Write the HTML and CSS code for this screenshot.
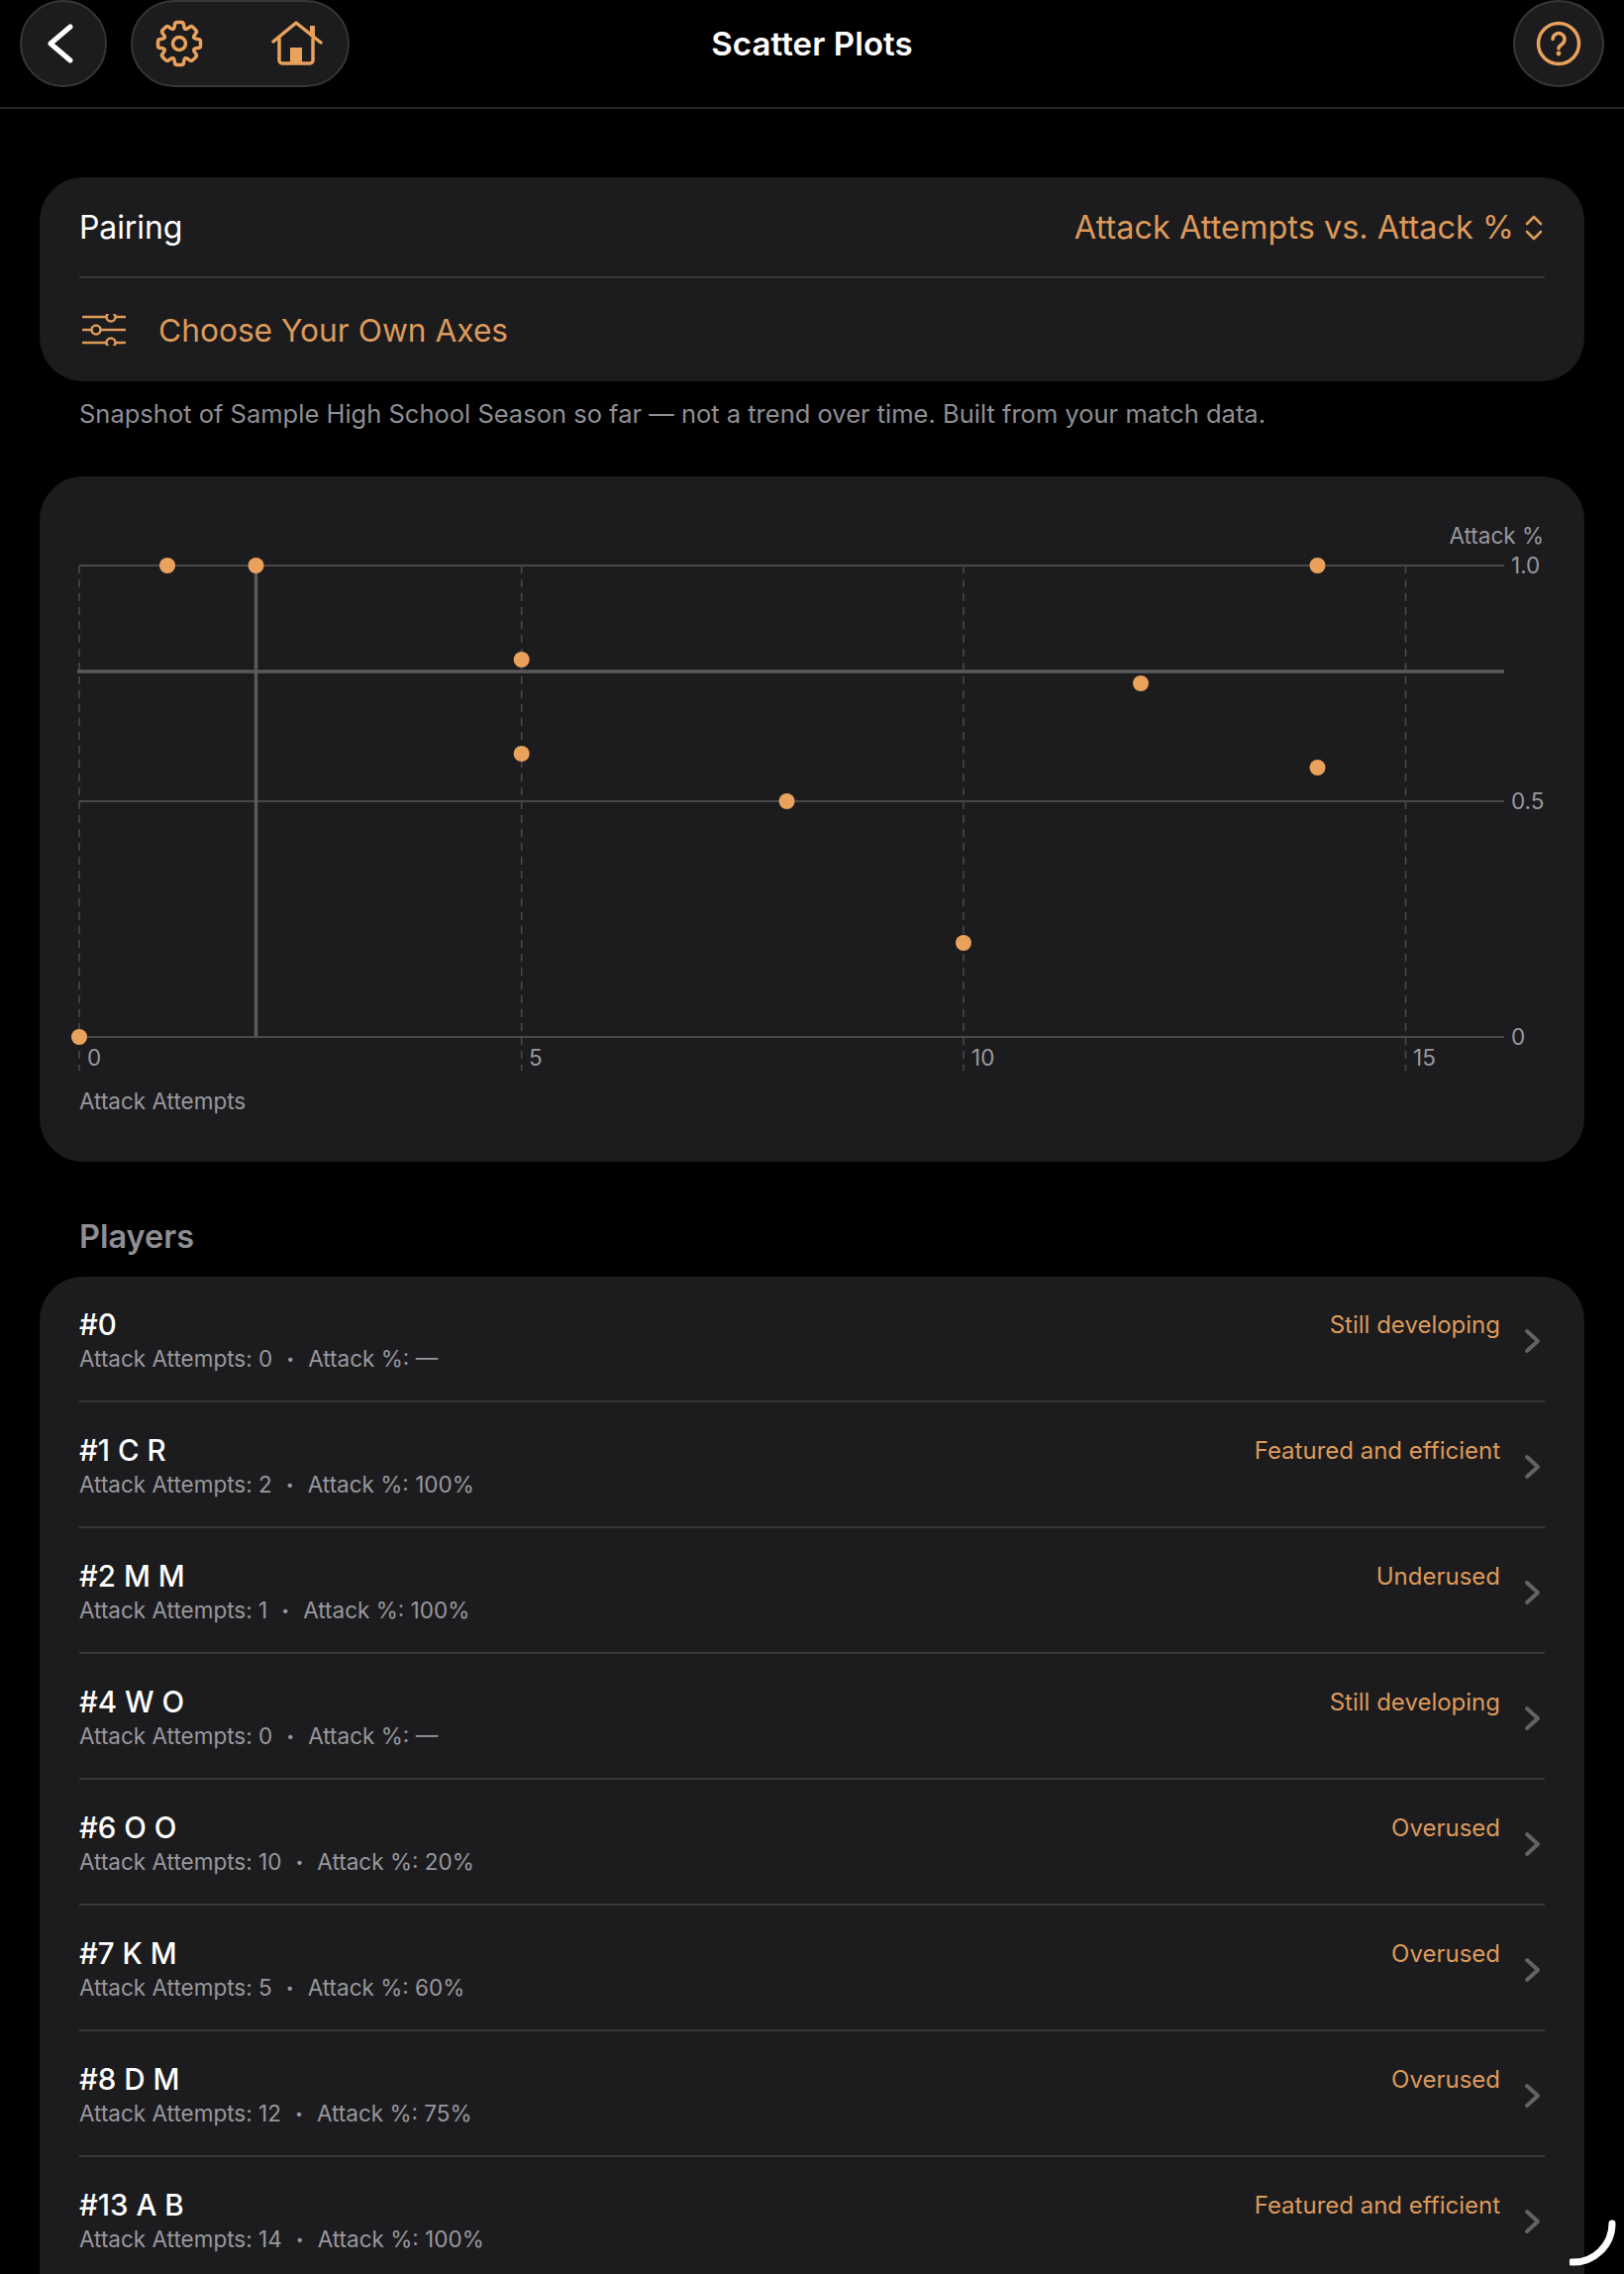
FILE: index.html
```html
<!DOCTYPE html>
<html lang="en">
<head>
<meta charset="utf-8">
<title>Scatter Plots</title>
<link rel="stylesheet" href="styles.css">
</head>
<body>
<div class="page">
  <header class="topbar">
    <div class="top-left">
      <button class="round-btn"><svg class="back-ico" width="26" height="40" viewBox="0 0 26 40"><path class="st-white" d="M23 3 L3 20 L23 37"/></svg></button>
      <div class="pill">
        <svg width="52" height="52" viewBox="-26 -26 52 52">
          <defs><path id="tooth" d="M-6.1-14.8C-4.6-15.8-4.6-17-4.6-18.5Q-4.6-21.5-2-21.5H2Q4.6-21.5 4.6-18.5C4.6-17 4.6-15.8 6.1-14.8"/></defs>
          <g class="st-orange">
            <use href="#tooth"/><use href="#tooth" transform="rotate(45)"/><use href="#tooth" transform="rotate(90)"/><use href="#tooth" transform="rotate(135)"/>
            <use href="#tooth" transform="rotate(180)"/><use href="#tooth" transform="rotate(225)"/><use href="#tooth" transform="rotate(270)"/><use href="#tooth" transform="rotate(315)"/>
            <circle r="6.5"/>
          </g>
        </svg>
        <svg width="52" height="46" viewBox="0 0 52 46">
          <g class="st-orange">
            <path d="M2 21 L25 2 L50 22"/>
            <path d="M8 18 V40 a3 3 0 0 0 3 3 H39 a3 3 0 0 0 3-3 V18"/>
          </g>
          <rect class="fl-orange" x="39" y="5" width="5" height="11"/>
          <rect class="fl-orange" x="19" y="27" width="12" height="16"/>
        </svg>
      </div>
    </div>
    <h1 class="title">Scatter Plots</h1>
    <div class="top-right">
      <button class="round-btn round-big">
        <svg width="46" height="46" viewBox="0 0 46 46">
          <circle class="st-orange" cx="23" cy="23" r="20.5"/>
          <path class="st-orange" d="M17 18.500 a6 6 0 1 1 9.500 5 c-2 1.500-3.500 2.500-3.500 4.500"/>
          <circle class="fl-orange" cx="23" cy="33" r="2.400"/>
        </svg>
      </button>
    </div>
  </header>

  <main class="content">
    <section class="card settings">
      <div class="set-row pairing">
        <span class="pair-label">Pairing</span>
        <span class="pair-value">Attack Attempts vs. Attack %
          <svg width="18" height="26" viewBox="0 0 18 26"><path class="st-orange-thin" d="M2 9 L9 2 L16 9 M2 17 L9 24 L16 17"/></svg>
        </span>
      </div>
      <div class="set-row axes">
        <svg width="44" height="32" viewBox="0 0 44 32">
          <g class="st-orange-thin">
            <path d="M1 3 H24 M34 3 H43 M1 16 H9 M19 16 H43 M1 29 H24 M34 29 H43"/>
            <circle cx="29" cy="3" r="4.500"/><circle cx="14" cy="16" r="4.500"/><circle cx="29" cy="29" r="4.500"/>
          </g>
        </svg>
        <span class="axes-label">Choose Your Own Axes</span>
      </div>
    </section>
    <p class="note">Snapshot of Sample High School Season so far — not a trend over time. Built from your match data.</p>

    <section class="card chart-card">
      <svg class="chart" width="1560" height="691" viewBox="0 0 1560 691">
        <g class="dash">
          <path d="M40 90 V600"/><path d="M486.7 90 V600"/><path d="M933 90 V600"/><path d="M1379.5 90 V600"/>
        </g>
        <g class="grid">
          <path d="M40 90 H1479"/><path d="M40 328 H1479"/><path d="M40 566 H1479"/>
        </g>
        <g class="rule">
          <path d="M38 197 H1479"/><path d="M218.500 90 V566"/>
        </g>
        <g class="dots">
          <circle cx="40" cy="566" r="8"/>
          <circle cx="129" cy="90" r="8"/>
          <circle cx="218.500" cy="90" r="8"/>
          <circle cx="486.700" cy="185" r="8"/>
          <circle cx="486.700" cy="280" r="8"/>
          <circle cx="754.600" cy="328" r="8"/>
          <circle cx="933" cy="471" r="8"/>
          <circle cx="1112" cy="209" r="8"/>
          <circle cx="1290.500" cy="90" r="8"/>
          <circle cx="1290.500" cy="294" r="8"/>
        </g>
        <g class="axis-text">
          <text x="1519" y="68" text-anchor="end">Attack %</text>
          <text x="1486" y="98">1.0</text>
          <text x="1486" y="336">0.5</text>
          <text x="1486" y="574">0</text>
          <text x="48" y="595">0</text>
          <text x="494" y="595">5</text>
          <text x="941" y="595">10</text>
          <text x="1387" y="595">15</text>
          <text x="40" y="639">Attack Attempts</text>
        </g>
      </svg>
    </section>

    <h2 class="players-head">Players</h2>

    <section class="card list">
      <div class="row"><div class="who"><div class="name">#0</div><div class="sub"><span>Attack Attempts: 0</span><i>•</i><span>Attack %: —</span></div></div><div class="status">Still developing</div><svg class="chev" width="18" height="26" viewBox="0 0 18 26"><path d="M3 3 L14 13 L3 23"/></svg></div>
      <div class="row"><div class="who"><div class="name">#1 C R</div><div class="sub"><span>Attack Attempts: 2</span><i>•</i><span>Attack %: 100%</span></div></div><div class="status">Featured and efficient</div><svg class="chev" width="18" height="26" viewBox="0 0 18 26"><path d="M3 3 L14 13 L3 23"/></svg></div>
      <div class="row"><div class="who"><div class="name">#2 M M</div><div class="sub"><span>Attack Attempts: 1</span><i>•</i><span>Attack %: 100%</span></div></div><div class="status">Underused</div><svg class="chev" width="18" height="26" viewBox="0 0 18 26"><path d="M3 3 L14 13 L3 23"/></svg></div>
      <div class="row"><div class="who"><div class="name">#4 W O</div><div class="sub"><span>Attack Attempts: 0</span><i>•</i><span>Attack %: —</span></div></div><div class="status">Still developing</div><svg class="chev" width="18" height="26" viewBox="0 0 18 26"><path d="M3 3 L14 13 L3 23"/></svg></div>
      <div class="row"><div class="who"><div class="name">#6 O O</div><div class="sub"><span>Attack Attempts: 10</span><i>•</i><span>Attack %: 20%</span></div></div><div class="status">Overused</div><svg class="chev" width="18" height="26" viewBox="0 0 18 26"><path d="M3 3 L14 13 L3 23"/></svg></div>
      <div class="row"><div class="who"><div class="name">#7 K M</div><div class="sub"><span>Attack Attempts: 5</span><i>•</i><span>Attack %: 60%</span></div></div><div class="status">Overused</div><svg class="chev" width="18" height="26" viewBox="0 0 18 26"><path d="M3 3 L14 13 L3 23"/></svg></div>
      <div class="row"><div class="who"><div class="name">#8 D M</div><div class="sub"><span>Attack Attempts: 12</span><i>•</i><span>Attack %: 75%</span></div></div><div class="status">Overused</div><svg class="chev" width="18" height="26" viewBox="0 0 18 26"><path d="M3 3 L14 13 L3 23"/></svg></div>
      <div class="row"><div class="who"><div class="name">#13 A B</div><div class="sub"><span>Attack Attempts: 14</span><i>•</i><span>Attack %: 100%</span></div></div><div class="status">Featured and efficient</div><svg class="chev" width="18" height="26" viewBox="0 0 18 26"><path d="M3 3 L14 13 L3 23"/></svg></div>
    </section>
  </main>

  <svg class="corner-arc" width="52" height="50" viewBox="0 0 52 50"><path d="M43 5 A39 39 0 0 1 2 44"/></svg>
</div>
</body>
</html>
```
FILE: styles.css
```css
* { box-sizing: border-box; }
html, body { margin: 0; padding: 0; background: #000; }
body { font-family: "Inter", "Liberation Sans", sans-serif; color: #fff; }
.page { position: relative; width: 1640px; height: 2296px; overflow: hidden; background: #000; }

.topbar {
  display: grid;
  grid-template-columns: 1fr auto 1fr;
  align-items: start;
  height: 110px;
  padding: 0 20px;
  border-bottom: 2px solid #252527;
}
.top-left { display: flex; gap: 24px; }
.top-right { display: flex; justify-content: flex-end; }
.round-btn {
  display: flex; align-items: center; justify-content: center;
  width: 88px; height: 88px; padding: 0;
  background: #1c1c1e; border: 2px solid #363638; border-radius: 50%;
}
.back-ico { margin-right: 6px; }
.round-big { width: 92px; }
.pill {
  display: flex; align-items: center; justify-content: space-between;
  width: 221px; height: 88px; padding: 0 25px 0 21px;
  background: #1c1c1e; border: 2px solid #363638; border-radius: 44px;
}
.title { margin: 26px 0 0; font-size: 33px; line-height: 36px; font-weight: 600; letter-spacing: 0.1px; }

.st-white { fill: none; stroke: #fff; stroke-width: 5; stroke-linecap: round; stroke-linejoin: round; }
.st-orange { fill: none; stroke: #e9a15c; stroke-width: 3.5; stroke-linecap: round; stroke-linejoin: round; }
.st-orange-thin { fill: none; stroke: #dd9a5a; stroke-width: 2.6; stroke-linecap: round; stroke-linejoin: round; }
.fl-orange { fill: #e9a15c; }

.content { padding: 69px 40px 0; }
.card { background: #1c1c1e; border-radius: 44px; }

.settings { height: 206px; padding: 0 40px; }
.set-row { display: flex; align-items: center; }
.pairing { height: 102px; justify-content: space-between; padding-top: 1px; border-bottom: 2px solid #38383a; }
.pair-label { font-size: 32px; font-weight: 400; color: #fff; letter-spacing: -0.1px; }
.pair-value { display: flex; align-items: center; gap: 11px; font-size: 32.5px; color: #dd9a5a; padding-right: 2px; }
.axes { height: 102px; gap: 33px; padding: 2px 0 0 3px; }
.axes-label { font-size: 31.700px; color: #dd9a5a; }
.note { margin: 0; height: 96px; padding: 17px 40px 0; font-size: 25.500px; line-height: 32px; color: #8e8e93; }

.chart-card { height: 692px; }
.chart { display: block; }
.dash path { stroke: #4a4a4d; stroke-width: 1.500; stroke-dasharray: 8 6; fill: none; }
.grid path { stroke: #48484a; stroke-width: 2; fill: none; }
.rule path { stroke: #5a5a5d; stroke-width: 3.500; fill: none; }
.dots circle { fill: #e9a15c; }
.axis-text text { font-family: "Inter", "Liberation Sans", sans-serif; font-size: 22.500px; fill: #98989d; }

.players-head { margin: 0; height: 116px; padding: 58px 40px 0; font-size: 32.500px; line-height: 36px; font-weight: 600; color: #8e8e93; }

.list { padding-bottom: 80px; }
.row {
  display: flex; align-items: flex-start;
  height: 127px; margin: 0 40px; padding-top: 30px;
  border-bottom: 2px solid #38383a;
}
.row:last-child { border-bottom: 0; }
.who { flex: 1; }
.name { font-size: 29.500px; line-height: 36px; font-weight: 500; color: #fff; }
.sub { display: flex; margin-top: 2px; font-size: 22.500px; line-height: 30px; color: #98989d; }
.sub i { font-style: normal; width: 36px; text-align: center; font-size: 14px; }
.status { margin-top: 1px; font-size: 24px; line-height: 36px; color: #dd9a5a; }
.chev { margin: 22px 3px 0 24px; }
.chev path { fill: none; stroke: #636366; stroke-width: 4; stroke-linecap: round; stroke-linejoin: round; }

.corner-arc { position: absolute; left: 1585px; top: 2240px; }
.corner-arc path { fill: none; stroke: #fff; stroke-width: 7; stroke-linecap: round; }
```
